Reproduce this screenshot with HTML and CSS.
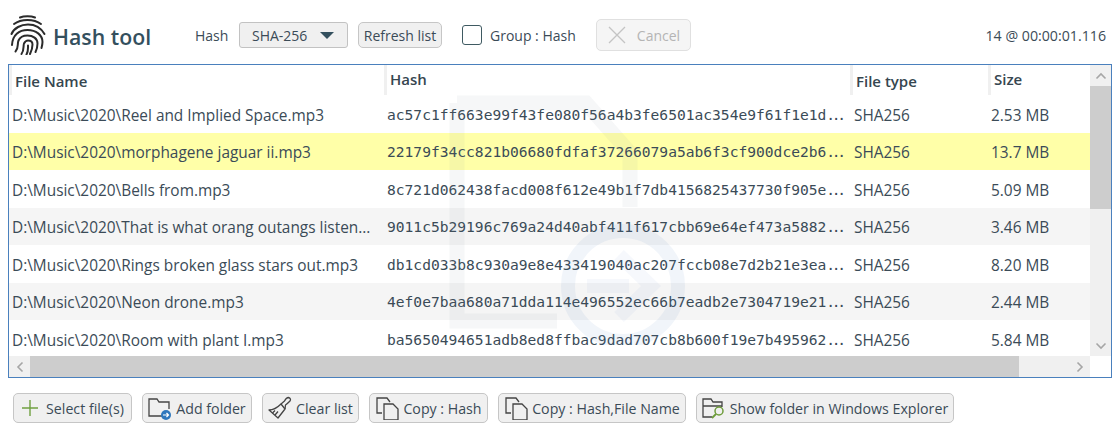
FILE: index.html
```html
<!DOCTYPE html>
<html lang="en">
<head>
<meta charset="utf-8">
<title>Hash tool</title>
<link rel="stylesheet" href="styles.css">
</head>
<body>
<header class="toolbar">
  <svg class="logo" viewBox="0 0 36 40" fill="none" stroke="#2b2b2b" stroke-width="2" stroke-linecap="round">
    <path d="M10 2.500C14 .8 21 .8 25 2.500"/>
    <path d="M4 9C11 3.500 24 3.500 31 9"/>
    <path d="M1.500 19C4 13 11 9.500 18 9.500S31 13 34.500 19"/>
    <path d="M2 30C2.500 20 9 15 17.500 15C26 15 32.500 20 32.500 27C32.500 29 32 31 31.500 33"/>
    <path d="M5.500 36.500C9 33 7 29 8.500 25.500C10 22 13.500 20.500 17.500 20.500C23 20.500 27.500 23.500 27.500 28.500C27.500 31.500 27 34 25.500 37"/>
    <path d="M11.500 39C14.500 35 13 31 14 28.500C15 26.500 16.500 25.500 18 25.500C20.500 25.500 22.500 27 22.500 29.500C22.500 33 21.500 36 20 39"/>
    <path d="M16.500 39.500C18.500 36 18 33 18 30.500"/>
  </svg>
  <h1 class="title">Hash tool</h1>
  <span class="hash-label">Hash</span>
  <div class="select">SHA-256<span class="caret"></span></div>
  <button class="btn refresh">Refresh list</button>
  <span class="check"></span>
  <span class="check-label">Group : Hash</span>
  <button class="btn cancel">
    <svg class="ico-x" viewBox="0 0 20 20" stroke="#c4c4c4" stroke-width="1.3" fill="none"><path d="M2 2L18 18M18 2L2 18"/></svg>
    Cancel
  </button>
  <span class="status">14 @ 00:00:01.116</span>
</header>

<section class="list">
  <div class="list-main">
    <div class="list-body">
      <div class="head">
        <div class="th">File Name</div>
        <div class="th up">Hash</div>
        <div class="th">File type</div>
        <div class="th up">Size</div>
      </div>
      <div class="row">
        <span>D:\Music\2020\Reel and Implied Space.mp3</span>
        <span class="mono">ac57c1ff663e99f43fe080f56a4b3fe6501ac354e9f61f1e1d<i class="dots">...</i></span>
        <span>SHA256</span><span>2.53 MB</span>
      </div>
      <div class="row hl">
        <span>D:\Music\2020\morphagene jaguar ii.mp3</span>
        <span class="mono">22179f34cc821b06680fdfaf37266079a5ab6f3cf900dce2b6<i class="dots">...</i></span>
        <span>SHA256</span><span>13.7 MB</span>
      </div>
      <div class="row">
        <span>D:\Music\2020\Bells from.mp3</span>
        <span class="mono">8c721d062438facd008f612e49b1f7db4156825437730f905e<i class="dots">...</i></span>
        <span>SHA256</span><span>5.09 MB</span>
      </div>
      <div class="row alt">
        <span>D:\Music\2020\That is what orang outangs listen...</span>
        <span class="mono">9011c5b29196c769a24d40abf411f617cbb69e64ef473a5882<i class="dots">...</i></span>
        <span>SHA256</span><span>3.46 MB</span>
      </div>
      <div class="row">
        <span>D:\Music\2020\Rings broken glass stars out.mp3</span>
        <span class="mono">db1cd033b8c930a9e8e433419040ac207fccb08e7d2b21e3ea<i class="dots">...</i></span>
        <span>SHA256</span><span>8.20 MB</span>
      </div>
      <div class="row alt">
        <span>D:\Music\2020\Neon drone.mp3</span>
        <span class="mono">4ef0e7baa680a71dda114e496552ec66b7eadb2e7304719e21<i class="dots">...</i></span>
        <span>SHA256</span><span>2.44 MB</span>
      </div>
      <div class="row">
        <span>D:\Music\2020\Room with plant I.mp3</span>
        <span class="mono">ba5650494651adb8ed8ffbac9dad707cb8b600f19e7b495962<i class="dots">...</i></span>
        <span>SHA256</span><span>5.84 MB</span>
      </div>
    </div>
    <div class="vbar">
      <div class="arrow"><svg viewBox="0 0 12 8"><path d="M1.500 6.500L6 2l4.500 4.500"/></svg></div>
      <div class="vthumb"></div>
      <div class="arrow"><svg viewBox="0 0 12 8"><path d="M1.500 1.500L6 6l4.500-4.500"/></svg></div>
    </div>
  </div>
  <div class="hbar">
    <div class="arrow h"><svg viewBox="0 0 8 12"><path d="M6.500 1.500L2 6l4.500 4.500"/></svg></div>
    <div class="hthumb"></div>
    <div class="arrow h"><svg viewBox="0 0 8 12"><path d="M1.500 1.500L6 6l-4.500 4.500"/></svg></div>
    <div class="corner"></div>
  </div>
  <svg class="watermark" viewBox="0 0 300 250" fill="none">
    <path d="M8 8H137L181 58V112M8 8V226H108" stroke="#7f8fa0" stroke-opacity=".07" stroke-width="15"/>
    <circle cx="174" cy="191" r="55" stroke="#4a7fc0" stroke-opacity=".08" stroke-width="14"/>
    <path d="M138 191H180M170 160L202 191L170 222" stroke="#4a7fc0" stroke-opacity=".05" stroke-width="14"/>
  </svg>
</section>

<footer class="actions">
  <button class="btn act sel">
    <svg class="ico" viewBox="0 0 18 18" stroke="#70a040" stroke-width="1.4" fill="none"><path d="M9 1V17M1 9H17"/></svg>
    Select file(s)
  </button>
  <button class="btn act add">
    <svg class="ico big" viewBox="0 0 24 24" fill="none">
      <path d="M1 17V3H9L11 6H21V13M1 17V20H14" stroke="#444" stroke-width="1.300"/>
      <circle cx="18" cy="19" r="5" fill="#2f78bd"/>
      <path d="M15 19H20.500M18.500 17L20.500 19L18.500 21" stroke="#fff" stroke-width="1.200"/>
    </svg>
    Add folder
  </button>
  <button class="btn act clr">
    <svg class="ico big" viewBox="0 0 24 24" fill="none" stroke="#444" stroke-width="1.300" stroke-linejoin="round">
      <path d="M13 8L16.500 5C17.500 3 18.500 1.500 20.500 1.500C22.500 2 23 3.500 22 5C20.500 6.500 19.500 7.500 17.500 9L17 13"/>
      <path d="M13 8L17 13L10 22L1 14C5 14 10 11 13 8Z"/>
      <path d="M7 19L10 15.500M4.500 17L7 14.500"/>
    </svg>
    Clear list
  </button>
  <button class="btn act cp1">
    <svg class="ico big" viewBox="0 0 24 24" fill="none" stroke="#444" stroke-width="1.300"><path d="M7 17H2V2H12L15 6"/><path d="M9 8H18L23 13V24H9Z"/></svg>
    Copy : Hash
  </button>
  <button class="btn act cp2">
    <svg class="ico big" viewBox="0 0 24 24" fill="none" stroke="#444" stroke-width="1.300"><path d="M7 17H2V2H12L15 6"/><path d="M9 8H18L23 13V24H9Z"/></svg>
    Copy : Hash,File Name
  </button>
  <button class="btn act shw">
    <svg class="ico big" viewBox="0 0 24 24" fill="none">
      <path d="M1 18V3H9L11 6H20V11M1 10H20M1 18V21H10" stroke="#444" stroke-width="1.300"/>
      <circle cx="17" cy="15" r="4" stroke="#6d9c3a" stroke-width="1.500"/>
      <path d="M14 18L10 22" stroke="#6d9c3a" stroke-width="1.800"/>
    </svg>
    Show folder in Windows Explorer
  </button>
</footer>
</body>
</html>
```
FILE: styles.css
```css
* { box-sizing: border-box; }
html, body { margin: 0; padding: 0; }
body {
  width: 1116px;
  height: 432px;
  overflow: hidden;
  background: #fff;
  color: #3b4b57;
  font-family: "Open Sans", "Noto Sans", sans-serif;
  font-size: 14px;
  padding: 0 4px 0 8px;
  display: flex;
  flex-direction: column;
}
.toolbar {
  height: 64px;
  display: flex;
  align-items: center;
  padding: 6px 0 0 2px;
  flex: none;
}
.logo { width: 36px; height: 40px; flex: none; }
.title {
  margin: 4px 0 0 7px;
  font-size: 21.3px;
  font-weight: 600;
  line-height: 30px;
  color: #34505e;
  width: 142px;
  flex: none;
}
.hash-label { width: 44px; flex: none; font-size: 14px; }
.select {
  width: 109px;
  height: 26px;
  border: 1px solid #c2c2c2;
  border-radius: 3px;
  background: #f0f0f0;
  display: flex;
  align-items: center;
  padding-left: 12px;
  flex: none;
}
.caret {
  width: 0; height: 0;
  margin-left: 13px;
  border-left: 7px solid transparent;
  border-right: 7px solid transparent;
  border-top: 7px solid #34505e;
}
.btn {
  font: inherit;
  color: inherit;
  background: #f0f0f0;
  border: 1px solid #c6c6c6;
  border-radius: 5px;
  padding: 0;
  display: flex;
  align-items: center;
  justify-content: center;
  flex: none;
}
.refresh { width: 84px; height: 26px; margin-left: 10px; }
.check {
  width: 20px; height: 20px;
  margin-left: 20px;
  border: 1.5px solid #3f5a62;
  border-radius: 3px;
  background: #fff;
  flex: none;
}
.check-label { width: 86px; margin-left: 8px; flex: none; }
.cancel {
  width: 95px; height: 32px;
  margin-left: 20px;
  color: #b4b4b4;
  background: #f5f5f5;
  border-color: #e0e0e0;
  gap: 10px;
}
.ico-x { width: 20px; height: 20px; }
.status { margin-left: auto; margin-right: 6px; font-size: 14.2px; }

.list {
  position: relative;
  height: 314px;
  border: 1px solid #4a80bd;
  flex: none;
  overflow: hidden;
  display: flex;
  flex-direction: column;
}
.list-main { display: flex; flex: none; height: 291px; }
.list-body { flex: 1; min-width: 0; overflow: hidden; }
.head, .row { display: grid; }
.head {
  height: 30px;
  grid-template-columns: 375px 466px 138px 1fr;
}
.row { grid-template-columns: 375px 467px 137px 1fr; }
.th {
  border-left: 3px solid #f0f0f0;
  padding: 6px 0 0 3px;
  font-size: 15px;
  font-weight: 600;
  color: #36464f;
}
.th.up { padding-top: 4px; }
.row {
  height: 37.5px;
  align-items: center;
  padding: 3px 0 0 3px;
  white-space: nowrap;
  font-size: 15.4px;
}
.row span { overflow: hidden; }
.row.hl { background: #ffffa8; }
.row.alt { background: #f5f5f5; }
.row .mono {
  font-family: "DejaVu Sans Mono", "Liberation Mono", monospace;
  font-size: 14.6px;
  margin-top: -2px;
}
.dots { font-style: normal; letter-spacing: -3.300px; }
.vbar {
  width: 21px;
  flex: none;
  background: #f0f0f0;
  display: flex;
  flex-direction: column;
  justify-content: space-between;
}
.vthumb { height: 123px; background: #cdcdcd; flex: none; margin-bottom: auto; }
.arrow {
  height: 21px;
  display: flex;
  align-items: center;
  justify-content: center;
  flex: none;
}
.arrow.h { width: 21px; }
.arrow svg { width: 12px; height: 8px; fill: none; stroke: #a6a6a6; stroke-width: 1.6; }
.arrow.h svg { width: 8px; height: 12px; }
.hbar {
  height: 21px;
  display: flex;
  background: #f0f0f0;
  flex: none;
}
.hthumb { width: 989px; background: #cdcdcd; flex: none; margin-right: auto; }
.corner { width: 21px; background: #fff; flex: none; }
.watermark {
  position: absolute;
  left: 440px;
  top: 30px;
  width: 300px;
  height: 250px;
  pointer-events: none;
}

.actions {
  display: flex;
  gap: 10px;
  padding: 15px 0 0 5px;
  flex: none;
  font-size: 14.2px;
}
.act { height: 30px; gap: 4px; white-space: nowrap; }
.ico { width: 18px; height: 18px; flex: none; }
.ico.big { width: 24px; height: 24px; }
.sel { width: 119px; gap: 7px; }
.add { width: 110px; }
.clr { width: 97px; }
.cp1 { width: 119px; }
.cp2 { width: 188px; }
.shw { width: 258px; }
```
